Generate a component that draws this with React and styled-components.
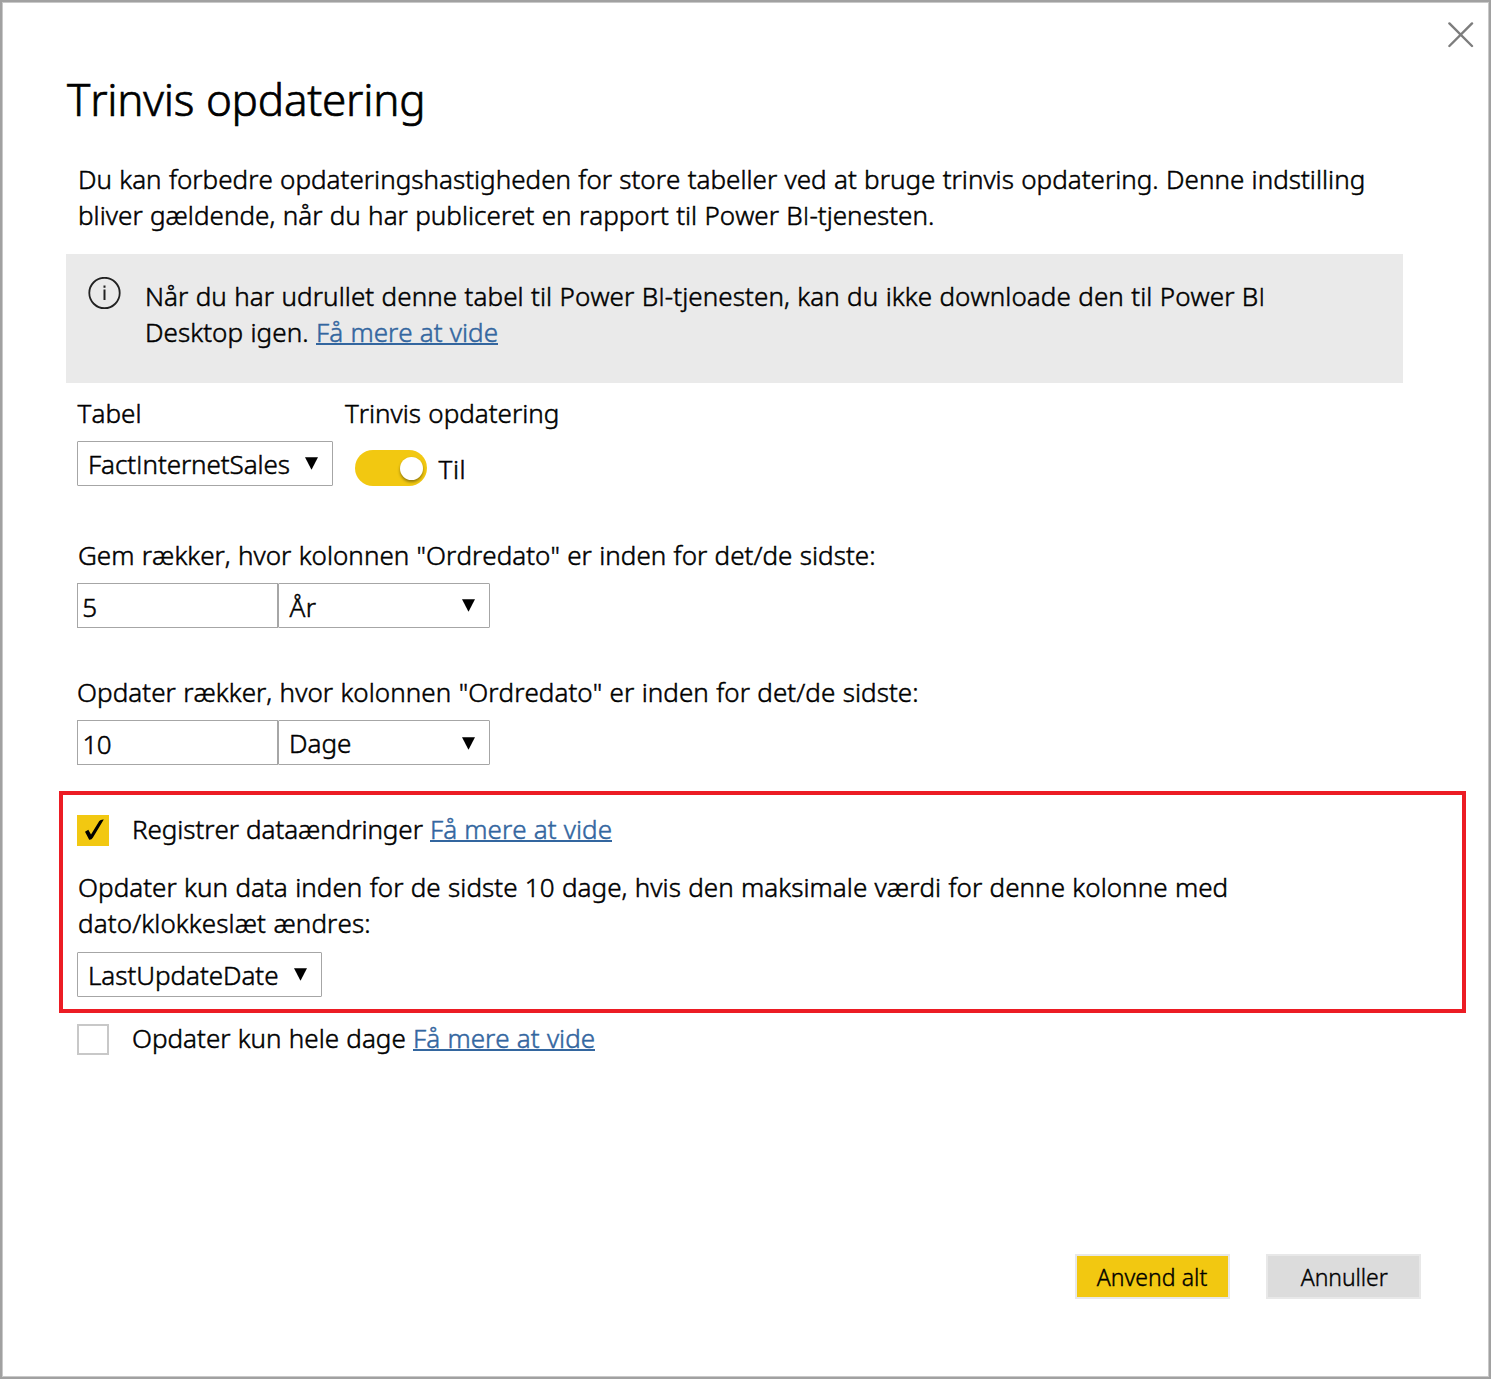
import React from "react";
import styled, { createGlobalStyle } from "styled-components";

const Global = createGlobalStyle`
  *, *::before, *::after { box-sizing: border-box; }
  body { margin: 0; background: #fff; color: #000; font-family: "Noto Sans", sans-serif; font-weight: 300; }
`;
const Dialog = styled.main`
  width: 1491px; height: 1379px; padding-bottom: 78px;
  display: flex; flex-direction: column; align-items: flex-start;
  border: 2px solid #a1a1a1; box-shadow: inset 0 0 0 1px #c9c9c9;
  font-size: 26px; line-height: 36px; font-kerning: none; word-spacing: 0.5px; -webkit-text-stroke: 0.5px currentColor;
`;
const TitleBar = styled.div`
  align-self: stretch; height: 67px; padding: 20px 15px 0 0; display: flex; justify-content: flex-end; align-items: flex-start;
`;
const CloseButton = styled.button`
  display: block; width: 26px; height: 26px; padding: 0; border: 0; background: none; color: #7d7d7d;
  svg { display: block; }
`;
const Title = styled.h1`
  margin: 0 0 32px 65px; font-size: 44px; font-weight: 300; line-height: 60px; white-space: nowrap;
  -webkit-text-stroke-width: 0.7px;
`;
const Tracked = styled.span`
  margin-left: ${p => p.$shift || 0}px; margin-top: ${p => p.$drop || 0}px;
  letter-spacing: ${p => p.$track || 0}px; white-space: pre;
`;
const PlainI = styled.span`font-family: "Open Sans", sans-serif;`;
const Paragraph = styled.p`
  margin: 0 0 0 76px; display: flex; flex-direction: column; align-items: flex-start;
`;
const Link = styled.a`
  height: 31px; display: inline-block; border-bottom: 2px solid #33669f; color: #33669f; white-space: pre;
`;
const Banner = styled.section`
  width: 1337px; height: 129px; margin: 21px 0 12px 64px; padding: 23px 0 0 22px;
  display: flex; align-items: flex-start; gap: 23px; background: #eaeaea;
  svg { display: block; }
`;
const Lines = styled.div`padding-top: 1px; display: flex; flex-direction: column; align-items: flex-start;`;
const Line = styled.div`height: 36px; display: flex; align-items: flex-start;`;
const FieldRow = styled.div`height: 91px; margin-left: 75px; display: flex; align-items: flex-start;`;
const Field = styled.div`
  width: ${p => p.$width || "auto"}; display: flex; flex-direction: column; align-items: flex-start; gap: 10px;
`;
const Block = styled.div`
  margin: ${p => p.$top}px 0 0 75px; display: flex; flex-direction: column; align-items: flex-start; gap: 10px;
`;
const Select = styled.div`
  width: ${p => p.$width}px; height: 45px; padding: 4px 14px 0 10px;
  display: flex; justify-content: space-between; align-items: flex-start;
  border: 1px solid #a6a6a6; border-radius: 1px; background: #fff;
  svg { display: block; margin-top: ${p => p.$arrowTop || 11}px; }
`;
const Input = styled.div`
  width: 201px; height: 45px; padding: 5px 5px 0; border: 1px solid #a6a6a6;
`;
const Group = styled.div`display: flex;`;
const ToggleRow = styled.div`height: 36px; margin: 9px 0 0 10px; display: flex; gap: 11px;`;
const Toggle = styled.span`
  width: 72px; height: 36px; padding: 7px 4px 0 0; display: flex; justify-content: flex-end; border-radius: 18px; background: #f2c811;
`;
const Thumb = styled.span`
  width: 23px; height: 23px; border-radius: 50%; background: #fff; box-shadow: 0 2px 3px rgba(0,0,0,.4);
`;
const Highlight = styled.section`
  width: 1407px; height: 222px; margin: 26px 0 0 57px; padding: 16px 0 0 14px; border: 4px solid #ec1c24;
  display: flex; flex-direction: column; align-items: flex-start;
`;
const CheckRow = styled.label`
  height: 36px; margin: ${p => p.$margin || 0}; display: flex; align-items: flex-start;
`;
const Box = styled.span`
  width: 32px; height: 31px; margin: 4px 23px 0 0; flex: none;
  border: ${p => p.$on ? 0 : "2px solid #c8c8c8"}; background: ${p => p.$on ? "#f2c811" : "#fff"};
  svg { display: block; }
`;
const Stack = styled.div`margin: 22px 0 11px 1px; display: flex; flex-direction: column; align-items: flex-start;`;
const Footer = styled.footer`
  align-self: flex-end; margin: auto 68px 0 0; display: flex; gap: 36px;
`;
const Button = styled.button`
  width: 155px; height: 45px; padding: 2px 0 0; border: 2px solid #e8e8e8;
  background: ${p => p.$primary ? "#f2c811" : "#dcdcdc"}; color: #000;
  font: 300 23px/39px "Noto Sans", sans-serif; -webkit-text-stroke: 0.4px #000;
`;

const Arrow = () => <svg width="13" height="13" viewBox="0 0 13 13"><path d="M0 .3h13L6.5 12.8z" fill="#000" /></svg>;
const Check = () => (
  <svg width="32" height="31" viewBox="0 0 32 31">
    <path d="M8 16.8 11.3 14.8 14 19.5 22.3 6Q23.5 4.2 26.8 4.4L15.8 22.8Q14.6 25 12.2 24.8Z" fill="#000" />
  </svg>
);
const Close = () => (
  <svg width="26" height="26" viewBox="0 0 26 26">
    <path d="M1.4 1.4 24 24M24 1.4 1.4 24" stroke="currentColor" strokeWidth="2.4" strokeLinecap="round" />
  </svg>
);
const Info = () => (
  <svg width="34" height="34" viewBox="0 0 34 34">
    <circle cx="16.5" cy="16" r="15.2" fill="none" stroke="#222" strokeWidth="1.8" />
    <path d="M16.5 12.5v10.5M16.5 8.5v2.2" stroke="#222" strokeWidth="2" />
  </svg>
);
// The capital I is set in a face that draws it without serifs.
const Text = ({ children, track, shift, drop }) => (
  <Tracked $track={track} $shift={shift} $drop={drop}>
    {children.split("I").map((part, i) => <React.Fragment key={i}>{i > 0 && <PlainI>I</PlainI>}{part}</React.Fragment>)}
  </Tracked>
);

export default function App() {
  return (
    <>
      <Global />
      <Dialog>
        <TitleBar><CloseButton aria-label="Luk"><Close /></CloseButton></TitleBar>
        <Title><Text track={-0.22}>Trinvis opdatering</Text></Title>
        <Paragraph>
          <Text track={0.02}>Du kan forbedre opdateringshastigheden for store tabeller ved at bruge trinvis opdatering. Denne indstilling</Text>
          <Text track={0.03}>bliver gældende, når du har publiceret en rapport til Power BI-tjenesten.</Text>
        </Paragraph>
        <Banner>
          <Info />
          <Lines>
            <Line><Text track={0.077}>Når du har udrullet denne tabel til Power BI-tjenesten, kan du ikke downloade den til Power BI</Text></Line>
            <Line><Text track={0.075}>Desktop igen. </Text><Link>Få mere at vide</Link></Line>
          </Lines>
        </Banner>
        <FieldRow>
          <Field $width="268px">
            <Text shift={0.5} track={0.1}>Tabel</Text>
            <Select $width={256}><Text track={-0.08}>FactInternetSales</Text><Arrow /></Select>
          </Field>
          <Field>
            <Text>Trinvis opdatering</Text>
            <ToggleRow><Toggle><Thumb /></Toggle><Text shift={0.6} drop={1} track={0.5}>Til</Text></ToggleRow>
          </Field>
        </FieldRow>
        <Block $top={51}>
          <Text shift={1} track={0.03}>Gem rækker, hvor kolonnen "Ordredato" er inden for det/de sidste:</Text>
          <Group>
            <Input><Text shift={-0.8}>5</Text></Input>
            <Select $width={212}><Text shift={0.5} drop={1} track={0.5}>År</Text><Arrow /></Select>
          </Group>
        </Block>
        <Block $top={46}>
          <Text track={0.058}>Opdater rækker, hvor kolonnen "Ordredato" er inden for det/de sidste:</Text>
          <Group>
            <Input><Text shift={-0.6} track={-0.6}>10</Text></Input>
            <Select $width={212} $arrowTop={12}><Text>Dage</Text><Arrow /></Select>
          </Group>
        </Block>
        <Highlight>
          <CheckRow><Box $on><Check /></Box><Text track={-0.066}>Registrer dataændringer </Text><Link>Få mere at vide</Link></CheckRow>
          <Stack>
            <Text track={0.045}>Opdater kun data inden for de sidste 10 dage, hvis den maksimale værdi for denne kolonne med</Text>
            <Text track={0.11}>dato/klokkeslæt ændres:</Text>
          </Stack>
          <Select $width={245}><Text track={-0.04}>LastUpdateDate</Text><Arrow /></Select>
        </Highlight>
        <CheckRow $margin="7px 0 0 75px"><Box /><Text>Opdater kun hele dage </Text><Link>Få mere at vide</Link></CheckRow>
        <Footer>
          <Button $primary><Text shift={-1} track={0.05}>Anvend alt</Text></Button>
          <Button><Text shift={1.5} track={-0.1}>Annuller</Text></Button>
        </Footer>
      </Dialog>
    </>
  );
}
